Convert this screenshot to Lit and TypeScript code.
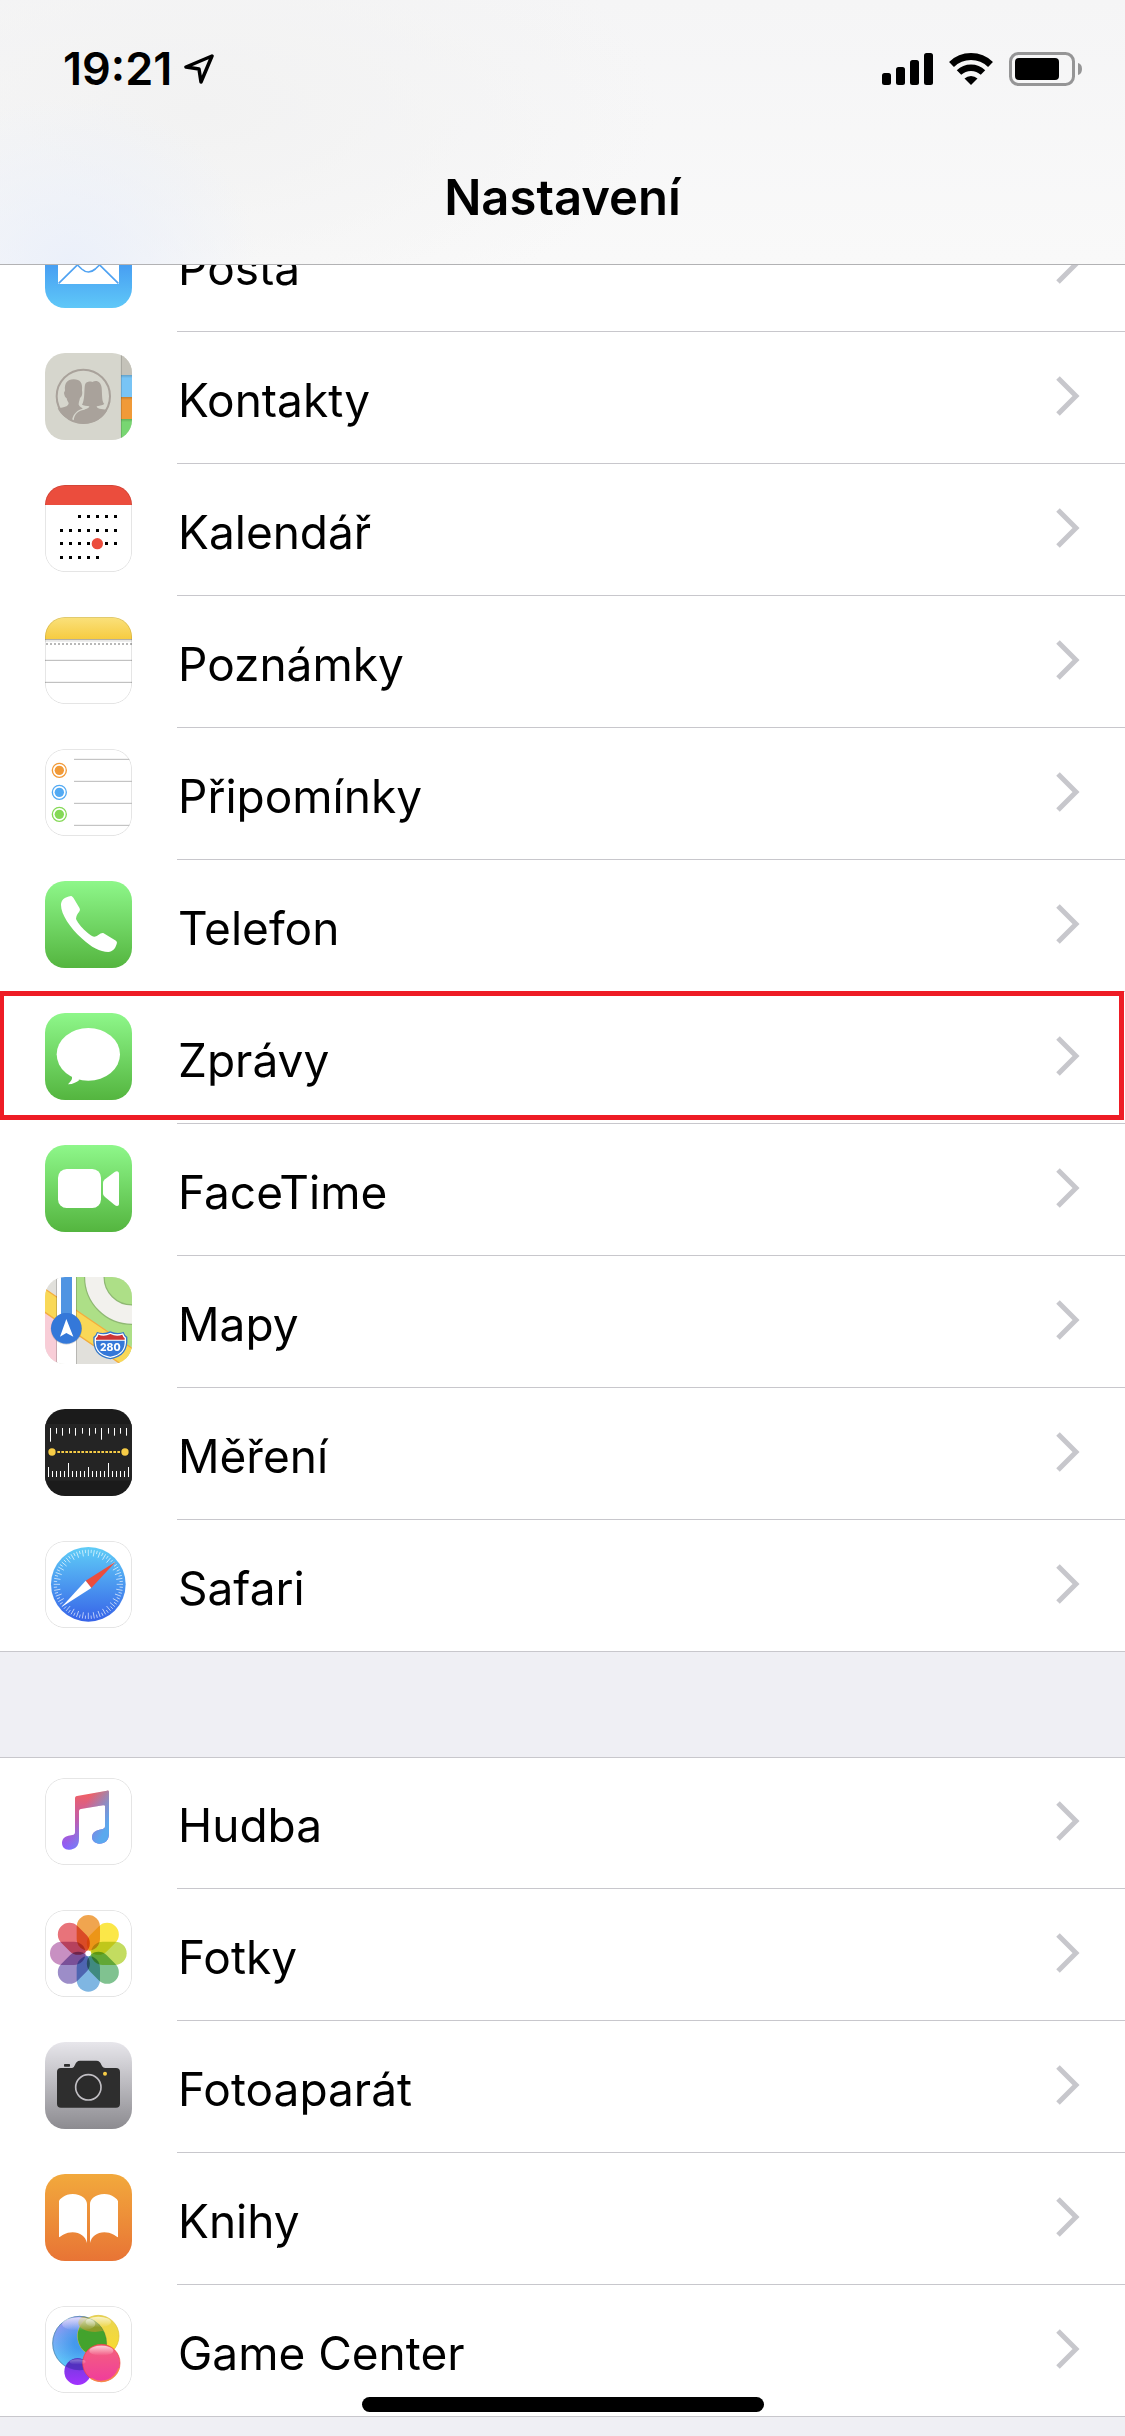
import { LitElement, html, svg, css, nothing, type SVGTemplateResult } from "lit";
import { customElement, property } from "lit/decorators.js";

/* Every app glyph is drawn on a 261-unit square, three units per pixel. */

const gradient = (id: string, top: string, bottom: string) => svg`
  <linearGradient id=${id} x1="0" y1="0" x2="0" y2="1">
    <stop offset="0" stop-color=${top}></stop>
    <stop offset="1" stop-color=${bottom}></stop>
  </linearGradient>`;

const plate = (fill: string) => svg`<rect width="261" height="261" fill=${fill}></rect>`;

const hairline = svg`<rect x="1" y="1" width="259" height="259" rx="59" fill="none" stroke="#000" stroke-opacity=".12" stroke-width="3"></rect>`;

const greenPlate = svg`<defs>${gradient("g", "#8ef78a", "#54b53f")}</defs>${plate("url(#g)")}`;

const calendarDots: number[][] = [
  [94, 2, 6],
  [136, 0, 6],
  [175, 0, 6],
  [217, 0, 4],
];

const shortTicks: number[][] = [
  [16, 41], [34, 17], [52, 23], [73, 17], [91, 23], [112, 17], [133, 23],
  [151, 17], [169, 35], [190, 17], [208, 23], [226, 17], [244, 23],
];

const petals = ["#f0a54f", "#fbe748", "#c3dc60", "#80c290", "#7fb6e2", "#9c8dc8", "#c890c2", "#e8737a"];

const bookPage = "M42 82C42 76 60 60 83 60C110 60 126 76 126 90V207C122 188 105 175 83 175C62 175 50 186 42 190Z";

const musicNote =
  "M90 61C90 57 92 55 96 54L186 38C190 37 192 39 192 43V166C192 188 180 197 163 197C150 197 141 189 141 178C141 165 150 158 163 155L173 153C178 152 180 150 180 145V86C180 82 178 81 174 82L108 93C104 94 102 96 102 100V180C102 205 92 214 72 215C58 215 51 206 51 195C51 183 58 176 70 173L82 171C88 170 90 168 90 162Z";

const glyphs: Record<string, SVGTemplateResult> = {
  mail: svg`
    <defs>${gradient("m", "#2f74ec", "#5fc8f8")}</defs>${plate("url(#m)")}
    <rect x="39" y="72" width="183" height="117" rx="3" fill="#fff"></rect>
    <g fill="none" stroke="#4fa2f2" stroke-width="5">
      <path d="M39 75L110 144Q130 162 151 144L222 75"></path>
      <path d="M41 187L98 131M220 187L163 131"></path>
    </g>`,
  contacts: svg`
    <defs>
      <linearGradient id="tab" x1="0" y1="0" x2="0" y2="1">
        <stop offset="0" stop-color="#000" stop-opacity=".18"></stop>
        <stop offset=".14" stop-color="#000" stop-opacity="0"></stop>
      </linearGradient>
    </defs>
    ${plate("#d6d6cd")}
    ${["#c4c2b9", "#78c4f5", "#f09a38", "#78d672"].map(
      (c, i) => svg`<rect x="228" y=${i * 66} width="33" height="66" fill=${c}></rect>
        ${i ? svg`<rect x="228" y=${i * 66} width="33" height="66" fill="url(#tab)"></rect>` : nothing}`,
    )}
    <path d="M229 0V261" stroke="#000" stroke-opacity=".16" stroke-width="3"></path>
    <circle cx="115" cy="130" r="80" fill="none" stroke="#a9a29b" stroke-width="6"></circle>
    <path fill="#a9a29b" d="M57 120C58 116 60 116 60 112C58 92 66 79 86 79C106 79 113 90 111 112C111 116 113 118 111 126C109 132 107 133 105 135C103 145 101 147 101 155C104 162 112 163 113 167C99 171 84 180 81 203C68 200 46 185 38 166C60 163 70 160 71 150C68 145 66 142 65 136C61 134 58 128 57 120Z"></path>
    <path fill="#a9a29b" d="M111 155C120 140 117 110 120 95C124 84 135 85 142 87C155 80 168 86 170 105C172 130 170 145 178 153C172 158 160 158 155 160C155 167 168 169 187 170C178 192 150 212 115 212C100 212 92 208 86 203C88 183 98 174 118 170C130 166 132 164 133 160C125 158 115 158 111 155Z"></path>`,
  calendar: svg`
    ${plate("#fff")}
    <rect width="261" height="60" fill="#eb4d3d"></rect>
    ${calendarDots.map(([y, from, to]) =>
      Array.from({ length: to - from + 1 }, (_, i) =>
        svg`<rect x=${45 + (from + i) * 27} y=${y - 4} width="9" height="9"></rect>`,
      ),
    )}
    <circle cx="157" cy="176" r="17" fill="#eb4d3d"></circle>
    ${hairline}`,
  notes: svg`
    <defs>${gradient("n", "#fae17c", "#f6cb40")}</defs>${plate("#fff")}
    <rect width="261" height="67" fill="url(#n)"></rect>
    <path d="M0 68H261" stroke="#b3aea0" stroke-width="4"></path>
    <path d="M0 72H261" stroke="#e6e6e6" stroke-width="4"></path>
    <path d="M3 81H261" stroke="#b8b8b8" stroke-width="6" stroke-dasharray="6 6"></path>
    <path d="M0 130H261M0 196H261" stroke="#b5b5b5" stroke-width="3"></path>
    ${hairline}`,
  reminders: svg`
    ${plate("#fff")}${hairline}
    <path d="M87 31H254M87 97H261M87 163H261M87 229H254" stroke="#b8b8b8" stroke-width="3"></path>
    ${["#f19a38", "#53aaf3", "#85d957"].map(
      (c, i) => svg`
        <circle cx="43" cy=${64 + i * 66} r="21" fill="#fff" stroke=${c} stroke-width="4"></circle>
        <circle cx="43" cy=${64 + i * 66} r="14" fill=${c}></circle>`,
    )}`,
  phone: svg`${greenPlate}
    <path fill="#fff" d="M48 72C48 58 58 48 78 45C82 46 84 49 86 52L103 80C106 86 105 88 102 93C97 99 94 105 93 113C99 130 132 164 148 167C152 167 155 165 160 162C166 158 171 155 176 157L208 176C216 181 217 183 215 189C210 205 203 211 190 213C165 213 140 200 110 172C75 140 48 100 48 72Z"></path>`,
  messages: svg`${greenPlate}
    <ellipse cx="130" cy="124" rx="95" ry="79" fill="#fff"></ellipse>
    <path fill="#fff" d="M76 184C84 192 84 200 69 214C85 213 95 207 104 200Z"></path>`,
  facetime: svg`${greenPlate}
    <rect x="39" y="72" width="129" height="117" rx="26" fill="#fff"></rect>
    <path fill="#fff" d="M174 116C174 109 176 107 180 103L209 81C216 76 222 79 222 86V176C222 183 216 185 209 180L180 156C176 152 174 150 174 144Z"></path>`,
  maps: svg`
    ${plate("#e1e0db")}
    <path d="M93 0H261V261L93 99Z" fill="#addf87"></path>
    <circle cx="261" cy="0" r="113" fill="none" stroke="#8fb873" stroke-width="62"></circle>
    <circle cx="261" cy="0" r="113" fill="none" stroke="#f2f1ed" stroke-width="55"></circle>
    <path d="M0 100L36 130V261H0Z" fill="#f8cdd7"></path>
    <path d="M-6 32L267 218V288L-6 102Z" fill="#f9d857" stroke="#f3ad3e" stroke-width="4"></path>
    <path d="M36 0V261M93 0V261" stroke="#000" stroke-opacity=".22" stroke-width="5"></path>
    <rect x="36" width="57" height="261" fill="#fff"></rect>
    <rect x="48" width="33" height="150" fill="#4f94e2"></rect>
    <circle cx="64" cy="156" r="47" fill="#000" opacity=".15"></circle>
    <circle cx="64" cy="154" r="46" fill="#3478d9"></circle>
    <path d="M64 126L85 179L64 168L45 179Z" fill="#fff"></path>
    <path d="M156 165Q176 172 196 163Q216 172 236 165Q239 175 247 180C250 220 234 240 196 247C158 240 142 220 145 180Q153 175 156 165Z" fill="#3478c9"></path>
    <path d="M158 169Q178 176 196 167Q214 176 234 169Q237 178 243 182C246 217 231 236 196 243C161 236 146 217 149 182Q155 178 158 169Z" fill="#fff"></path>
    <path d="M160 173Q178 180 196 171Q214 180 232 173Q234 180 239 184V188H153V184Q158 180 160 173Z" fill="#cb3634"></path>
    <path d="M153 191H239C240 217 228 233 196 239C164 233 152 217 153 191Z" fill="#3478d9"></path>
    <text class="route" x="196" y="222" text-anchor="middle">280</text>`,
  measure: svg`
    ${plate("#1b1b1b")}
    <rect y="45" width="261" height="170" fill="#242424"></rect>
    ${shortTicks.map(([x, h]) => svg`<rect x=${x - 1} y="57" width="3" height=${h} fill="#fff"></rect>`)}
    ${Array.from({ length: 21 }, (_, i) => {
      const h = i % 5 ? 18 : i % 10 ? 42 : 30;
      return svg`<rect x=${9 + i * 12} y=${204 - h} width="3" height=${h} fill="#fff"></rect>`;
    })}
    <path d="M37 129H228" stroke="#f6cc46" stroke-width="6" stroke-dasharray="8 4"></path>
    <circle cx="21" cy="129" r="11" fill="#f6cc46"></circle>
    <circle cx="240" cy="129" r="11" fill="#f6cc46"></circle>`,
  safari: svg`
    <defs>${gradient("s", "#5fcdf7", "#3763e8")}</defs>${plate("#fff")}${hairline}
    <circle cx="130" cy="130" r="112" fill="url(#s)"></circle>
    ${Array.from({ length: 72 }, (_, i) => svg`
      <path d="M130 ${26}V${i % 2 ? 36 : 45}" stroke="#fff" stroke-opacity=".9" stroke-width="2" transform="rotate(${i * 5} 130 130)"></path>`)}
    <path d="M212 62L122 119L139 141Z" fill="#eb4d3d"></path>
    <path d="M50 198L122 119L139 141Z" fill="#fff"></path>`,
  music: svg`
    <defs>
      ${gradient("v", "#f5605d", "#8a5cff")}
      <linearGradient id="b" gradientUnits="userSpaceOnUse" x1="118" y1="85" x2="206" y2="130">
        <stop offset="0" stop-color="#5aa9ee" stop-opacity="0"></stop>
        <stop offset=".9" stop-color="#5aa9ee"></stop>
      </linearGradient>
    </defs>
    ${plate("#fff")}${hairline}
    <path d=${musicNote} fill="url(#v)"></path>
    <path d=${musicNote} fill="url(#b)"></path>`,
  photos: svg`
    ${plate("#fff")}${hairline}
    <g class="blend">
      ${petals.map((c, i) => svg`<rect x="95" y="15" width="70" height="107" rx="35" fill=${c} transform="rotate(${i * 45} 130 130)"></rect>`)}
    </g>
    <circle cx="130" cy="130" r="8" fill="#fff"></circle>`,
  camera: svg`
    <defs>${gradient("c", "#e7e6eb", "#8c8b90")}</defs>${plate("url(#c)")}
    <rect x="57" y="66" width="18" height="8" rx="2" fill="#2e2e2e"></rect>
    <path d="M48 78H80C92 78 88 56 105 56H154C172 56 166 78 182 78H213Q225 78 225 90V185Q225 197 213 197H48Q36 197 36 185V90Q36 78 48 78Z" fill="#2e2e2e"></path>
    <circle cx="130" cy="136" r="38" fill="#2b2b2b" stroke="#c0bec3" stroke-width="5"></circle>
    <circle cx="180" cy="95" r="6" fill="#f6cc46"></circle>`,
  books: svg`
    <defs>${gradient("k", "#f2a93c", "#e87435")}</defs>${plate("url(#k)")}
    <path d=${bookPage} fill="#fff"></path>
    <path d=${bookPage} fill="#fff" transform="matrix(-1 0 0 1 261 0)"></path>`,
  games: svg`
    <defs>
      ${gradient("g1", "#9a8cf0", "#55d2fb")}
      ${gradient("g2", "#e9d552", "#fbdc2c")}
      ${gradient("g3", "#f4637c", "#f03c9c")}
      ${gradient("g4", "#6a3bd8", "#a332ff")}
      <radialGradient id="core" cx=".5" cy=".5" r=".5">
        <stop offset=".2" stop-color="#2f8fe8" stop-opacity=".7"></stop>
        <stop offset="1" stop-color="#2f8fe8" stop-opacity="0"></stop>
      </radialGradient>
      <linearGradient id="shine" x1="0" y1="0" x2="0" y2="1">
        <stop offset="0" stop-color="#fff" stop-opacity=".7"></stop>
        <stop offset="1" stop-color="#fff" stop-opacity="0"></stop>
      </linearGradient>
      <clipPath id="lens"><circle cx="104" cy="112" r="81"></circle></clipPath>
    </defs>
    ${plate("#fff")}${hairline}
    <circle cx="104" cy="112" r="81" fill="url(#g1)" stroke="#5a8fe6" stroke-width="2"></circle>
    <circle cx="104" cy="112" r="80" fill="url(#core)"></circle>
    <circle cx="160" cy="90" r="62" fill="url(#g2)" stroke="#dcbf35" stroke-width="2"></circle>
    <g clip-path="url(#lens)">
      <circle cx="160" cy="90" r="62" fill="#43a32d"></circle>
      <ellipse cx="150" cy="50" rx="50" ry="28" fill="#a59a2a" opacity=".75"></ellipse>
    </g>
    <circle cx="104" cy="112" r="81" fill="none" stroke="#2c6f50" stroke-opacity=".45" stroke-width="2"></circle>
    <circle cx="98" cy="197" r="40" fill="url(#g4)"></circle>
    <g clip-path="url(#lens)"><circle cx="98" cy="197" r="40" fill="#3a2ba8" opacity=".6"></circle></g>
    <circle cx="169" cy="171" r="56" fill="url(#g3)" stroke="#ee4438" stroke-width="2"></circle>
    <path d="M138 217A56 56 0 0 0 222 187" fill="none" stroke="#fa9a3c" stroke-width="5" opacity=".7"></path>
    <ellipse cx="101" cy="54" rx="50" ry="20" fill="url(#shine)"></ellipse>
    <ellipse cx="160" cy="48" rx="38" ry="16" fill="url(#shine)"></ellipse>
    <ellipse cx="169" cy="134" rx="36" ry="15" fill="url(#shine)"></ellipse>
    <ellipse cx="98" cy="168" rx="24" ry="8" fill="url(#shine)" opacity=".5"></ellipse>`,
};

@customElement("app-glyph")
class AppGlyph extends LitElement {
  @property() name = "";

  static styles = css`
    :host {
      display: block;
      width: 87px;
      height: 87px;
      border-radius: 20px;
      overflow: hidden;
      flex: none;
    }
    .art {
      display: block;
      width: 100%;
      height: 100%;
    }
    .blend {
      isolation: isolate;
    }
    .blend rect {
      mix-blend-mode: multiply;
    }
    .route {
      font: 800 31px Inter, sans-serif;
      fill: #fff;
    }
  `;

  render() {
    return html`<svg class="art" viewBox="0 0 261 261" aria-hidden="true">${glyphs[this.name]}</svg>`;
  }
}

@customElement("settings-row")
class SettingsRow extends LitElement {
  @property() icon = "";
  @property() label = "";
  @property({ type: Boolean }) marked = false;
  @property({ type: Boolean }) last = false;

  static styles = css`
    :host {
      display: block;
    }
    .row {
      position: relative;
      display: flex;
      align-items: stretch;
      gap: 45px;
      padding-left: 45px;
      color: #000;
      text-decoration: none;
    }
    app-glyph {
      margin: 21px 0 24px;
    }
    .body {
      flex: 1;
      display: flex;
      align-items: center;
      justify-content: space-between;
      padding: 0 45px 4px 0;
      border-bottom: 1px solid #c8c7cc;
    }
    .row.last .body {
      border-bottom-color: transparent;
    }
    .label {
      padding: 8px 0 0 1px;
      font-size: 46px;
      line-height: 60px;
    }
    .chevron {
      display: block;
      width: 24px;
      height: 40px;
    }
    .mark {
      position: absolute;
      inset: -1px 1px 4px -1px;
      border: 5px solid #ee1c25;
      pointer-events: none;
    }
  `;

  render() {
    return html`
      <a class="row ${this.last ? "last" : ""}" href="#${this.icon}">
        <app-glyph name=${this.icon}></app-glyph>
        <span class="body">
          <span class="label">${this.label}</span>
          <svg class="chevron" viewBox="0 0 24 40" aria-hidden="true">
            <path d="M2 2L20 20L2 38" fill="none" stroke="#c7c7cc" stroke-width="5"></path>
          </svg>
        </span>
        ${this.marked ? html`<span class="mark"></span>` : nothing}
      </a>
    `;
  }
}

@customElement("status-bar")
class StatusBar extends LitElement {
  static styles = css`
    :host {
      display: flex;
      align-items: center;
      justify-content: space-between;
      padding: 39px 42px 0 63px;
    }
    .side {
      display: flex;
      align-items: center;
    }
    .left {
      gap: 12px;
    }
    .right {
      gap: 15px;
    }
    .time {
      font-size: 45px;
      font-weight: 600;
      line-height: 60px;
    }
    svg {
      display: block;
    }
  `;

  render() {
    return html`
      <div class="side left">
        <time class="time">19:21</time>
        <svg width="30" height="30" viewBox="0 0 30 30" role="img" aria-label="Poloha">
          <path d="M28 2L2 13L15 15L17 28Z" fill="none" stroke="#000" stroke-width="3.500" stroke-linejoin="round"></path>
        </svg>
      </div>
      <div class="side right">
        <svg width="51" height="34" viewBox="0 0 51 34" role="img" aria-label="Signál">
          <rect x="0" y="21" width="9" height="12" rx="2.5"></rect>
          <rect x="14" y="15" width="9" height="18" rx="2.5"></rect>
          <rect x="28" y="8" width="9" height="25" rx="2.5"></rect>
          <rect x="42" y="1" width="9" height="32" rx="2.5"></rect>
        </svg>
        <svg width="46" height="34" viewBox="0 0 46 34" role="img" aria-label="Wi-Fi">
          <path d="M3.500 12.500A28 28 0 0 1 42.500 12.500" fill="none" stroke="#000" stroke-width="7"></path>
          <path d="M11 20.500A17.500 17.500 0 0 1 35 20.500" fill="none" stroke="#000" stroke-width="6.500"></path>
          <path d="M16.500 26.500A9.500 9.500 0 0 1 29.500 26.500L23 33Z"></path>
        </svg>
        <svg width="74" height="34" viewBox="0 0 74 34" role="img" aria-label="Baterie">
          <rect x="1.500" y="1.500" width="63" height="31" rx="8" fill="none" stroke="#959596" stroke-width="3"></rect>
          <rect x="6" y="6" width="44" height="22" rx="4"></rect>
          <path d="M69 11Q73 12 73 17Q73 22 69 23Z" fill="#959596"></path>
        </svg>
      </div>
    `;
  }
}

interface Item {
  icon: string;
  label: string;
  marked?: boolean;
}

const groups: Item[][] = [
  [
    { icon: "mail", label: "Pošta" },
    { icon: "contacts", label: "Kontakty" },
    { icon: "calendar", label: "Kalendář" },
    { icon: "notes", label: "Poznámky" },
    { icon: "reminders", label: "Připomínky" },
    { icon: "phone", label: "Telefon" },
    { icon: "messages", label: "Zprávy", marked: true },
    { icon: "facetime", label: "FaceTime" },
    { icon: "maps", label: "Mapy" },
    { icon: "measure", label: "Měření" },
    { icon: "safari", label: "Safari" },
  ],
  [
    { icon: "music", label: "Hudba" },
    { icon: "photos", label: "Fotky" },
    { icon: "camera", label: "Fotoaparát" },
    { icon: "books", label: "Knihy" },
    { icon: "games", label: "Game Center" },
  ],
];

@customElement("app-root")
class AppRoot extends LitElement {
  static styles = css`
    :host {
      display: block;
      position: relative;
      min-height: 100vh;
      background: #efeff4;
      color: #000;
      font-family: Inter, "Liberation Sans", sans-serif;
    }
    .header {
      position: sticky;
      top: 0;
      z-index: 1;
      box-sizing: border-box;
      height: 265px;
      border-bottom: 1px solid #b2b2b4;
      background:
        radial-gradient(ellipse 190px 170px at 70px 265px, #ebf0fa, rgba(238, 242, 250, 0)),
        radial-gradient(ellipse 460px 220px at 200px 110px, #f2f2f2, rgba(243, 243, 243, 0)),
        linear-gradient(#f5f5f6, #f9f9f9);
    }
    .title {
      margin: 0;
      padding-top: 69px;
      text-align: center;
      font-size: 49px;
      font-weight: 600;
      line-height: 60px;
    }
    .list {
      display: flex;
      flex-direction: column;
      gap: 105px;
      margin-top: -65px;
    }
    .group {
      box-shadow: inset 0 1px #c8c7cc, inset 0 -1px #c8c7cc;
      background: #fff;
    }
    .home {
      position: absolute;
      left: 0;
      right: 0;
      bottom: 24px;
      width: 402px;
      height: 15px;
      margin: 0 auto;
      border-radius: 8px;
      background: #000;
    }
  `;

  render() {
    return html`
      <header class="header">
        <status-bar></status-bar>
        <h1 class="title">Nastavení</h1>
      </header>
      <main class="list">
        ${groups.map(
          (items) => html`
            <nav class="group">
              ${items.map(
                (item, i) => html`
                  <settings-row
                    icon=${item.icon}
                    label=${item.label}
                    ?marked=${item.marked}
                    ?last=${i === items.length - 1}
                  ></settings-row>
                `,
              )}
            </nav>
          `,
        )}
      </main>
      <div class="home"></div>
    `;
  }
}
